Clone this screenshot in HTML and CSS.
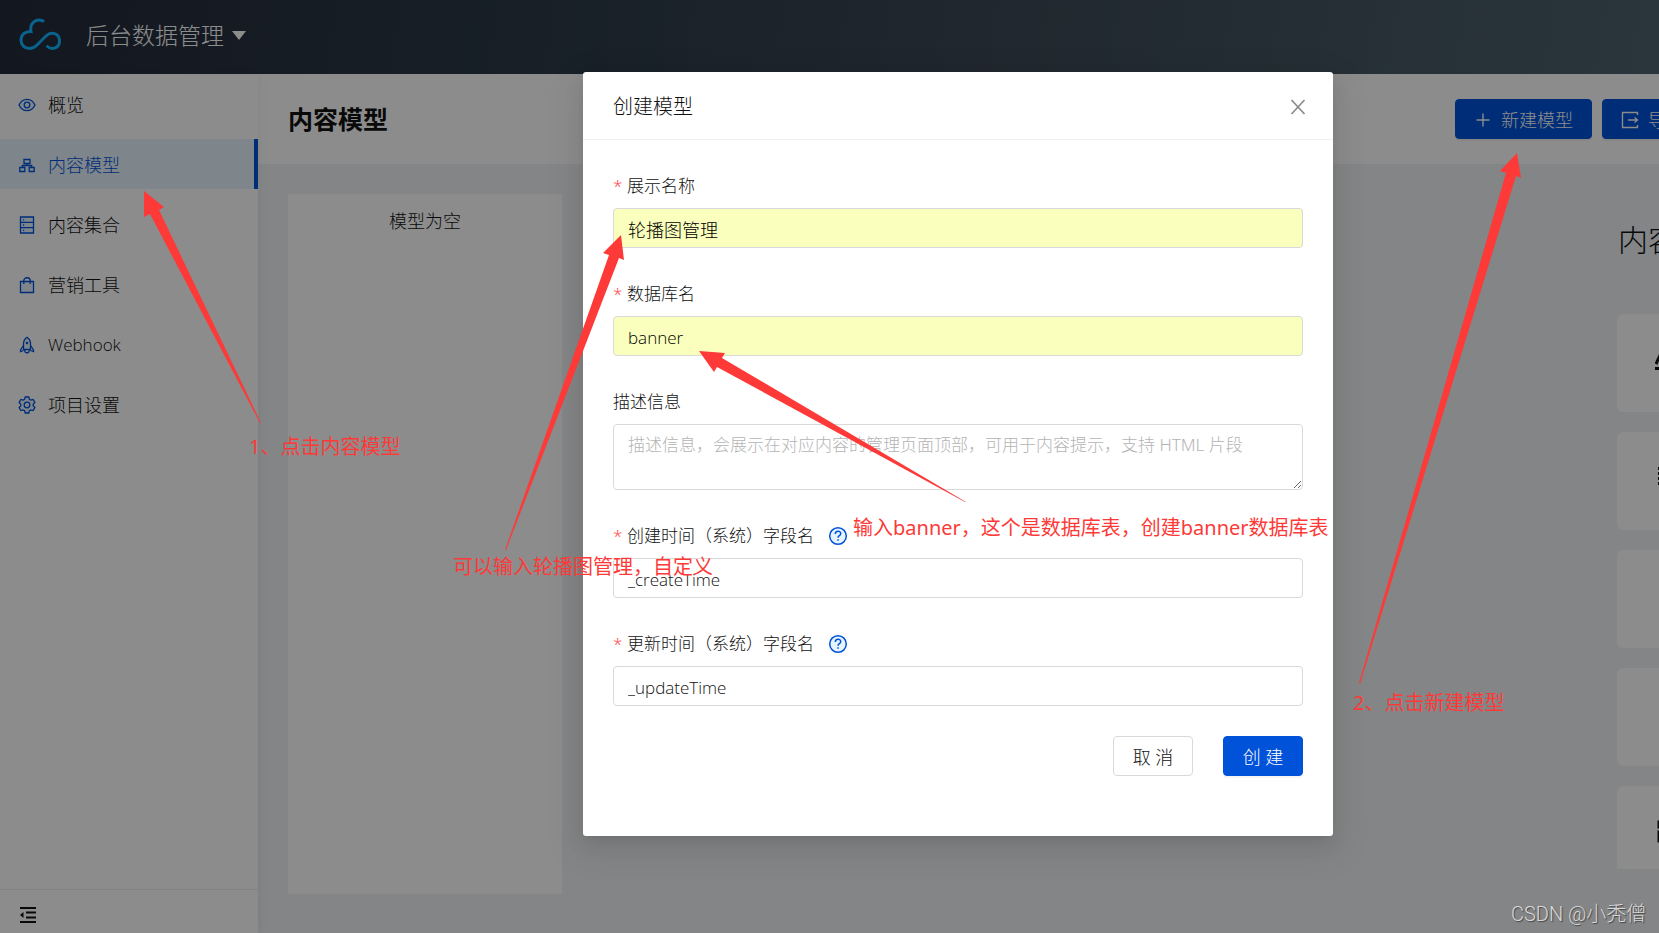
FILE: index.html
```html
<!DOCTYPE html>
<html lang="zh-CN">
<head>
<meta charset="utf-8">
<title>内容模型 - 后台数据管理</title>
<link rel="stylesheet" href="styles.css">
</head>
<body>
<div class="app">
  <header class="topbar">
    <svg class="logo" width="44" height="34" viewBox="0 0 44 34" aria-hidden="true">
      <path d="M25 4C18 1 11.500 6 13 14.500C7 14 3 18 3 23C3 28 6.500 31.500 11.500 31.500C15 31.500 17 30 19 28L28 19C33 14 41.500 16 41.500 24C41.500 31 34 33.500 29.500 29.500"/>
    </svg>
    <button class="project" type="button">后台数据管理<span class="caret"></span></button>
  </header>
  <div class="body">
    <aside class="sidebar">
      <nav class="menu">
        <a class="item" href="#overview">
          <svg class="icon" viewBox="0 0 18 18"><path class="tint" d="M1 9C4.500 1.500 13.500 1.500 17 9C13.500 16.500 4.500 16.500 1 9Z"/><circle cx="9" cy="9" r="2.800"/></svg>
          概览</a>
        <a class="item active" href="#schema">
          <svg class="icon" viewBox="0 0 18 18"><path d="M6 3.500h6v4H6zM1.800 11.500h5v4h-5zM11.200 11.500h5v4h-5zM9 7.500v2M4.300 11.500v-2h9.400v2"/></svg>
          内容模型</a>
        <a class="item" href="#content">
          <svg class="icon" viewBox="0 0 18 18"><path class="tint" d="M2.500 1h13v16h-13z"/><path d="M2.500 6.300h13M2.500 11.700h13M5 3.800h1.200M5 9h1.200M5 14.400h1.200"/></svg>
          内容集合</a>
        <a class="item" href="#marketing">
          <svg class="icon" viewBox="0 0 18 18"><path class="tint" d="M2.500 5.500h13v11h-13z"/><path d="M5.800 8V4.500C5.800 .8 12.200 .8 12.200 4.500V8"/></svg>
          营销工具</a>
        <a class="item latin" href="#webhook">
          <svg class="icon" viewBox="0 0 18 18"><path class="tint" d="M5.500 13.500V7Q6 3 9 1.200Q12 3 12.500 7v6.500z"/><path d="M5.500 9.500L2.500 14v1.500l3-1M12.500 9.500l3 4.500v1.500l-3-1M6.500 14Q7 17 9 17t2.500-3"/><circle cx="9" cy="7" r=".6"/></svg>
          Webhook</a>
        <a class="item" href="#settings">
          <svg class="icon" viewBox="0 0 18 18"><path class="tint" d="M7.200 1h3.600l.6 2.300 1.400.8 2.300-.7 1.800 3.100-1.700 1.700v1.600l1.700 1.700-1.800 3.100-2.300-.7-1.400.8-.6 2.300H7.200l-.6-2.300-1.400-.8-2.300.7-1.800-3.100 1.700-1.700V8.200L1.100 6.500l1.800-3.100 2.300.7 1.400-.8z"/><circle cx="9" cy="9" r="2.800"/></svg>
          项目设置</a>
      </nav>
      <button class="collapse" type="button" aria-label="收起菜单">
        <svg width="18" height="18" viewBox="0 0 18 18"><path d="M1 2h16M7 6.500h10M7 11.500h10M1 16h16" stroke="currentColor" stroke-width="1.800"/><path d="M1 9l3.500-3v6z" fill="currentColor"/></svg>
      </button>
    </aside>
    <main class="workspace">
      <div class="pagehead">
        <h1>内容模型</h1>
        <div class="actions">
          <button class="btn primary" type="button"><svg class="glyph" viewBox="0 0 18 18"><path d="M9 2.500v13M2.500 9h13"/></svg>新建模型</button>
          <button class="btn primary" type="button"><svg class="glyph" viewBox="0 0 18 18"><path d="M16.500 4V1.500h-15v15h15V14M7 9h9M13.500 6.500L16.500 9l-3 2.500"/></svg>导出模型</button>
          <button class="btn primary" type="button"><svg class="glyph" viewBox="0 0 18 18"><path d="M16.500 4V1.500h-15v15h15V14M7 9h9M9.500 6.500L7 9l2.500 2.500"/></svg>导入模型</button>
        </div>
      </div>
      <div class="columns">
        <section class="models">模型为空</section>
        <section class="types">
          <h2>内容类型</h2>
          <div class="typelist">
            <div class="type"><svg viewBox="0 0 24 24"><path d="M1 17L8 2h2l8 15M0 21.500h20M5 12h10"/></svg>单行字符串</div>
            <div class="type"><svg viewBox="0 0 24 24"><path d="M3 3.500h18M3 8.500h18M3 13.500h18M3 18.500h18"/></svg>多行字符串</div>
            <div class="type"></div>
            <div class="type"></div>
            <div class="type"><svg viewBox="0 0 24 24"><path d="M4 3h16v5H4zM4 13h16v9H4z"/></svg>布尔值</div>
          </div>
        </section>
      </div>
    </main>
  </div>

  <div class="mask">
    <div class="modal" role="dialog" aria-labelledby="dialog-title">
      <div class="modalhead">
        <h3 id="dialog-title">创建模型</h3>
        <button class="close" type="button" aria-label="关闭"><svg width="16" height="18" viewBox="0 0 16 18"><path d="M1.500 2L14.500 16M14.500 2L1.500 16"/></svg></button>
      </div>
      <form class="form">
        <div class="field">
          <label class="required" for="display-name">展示名称</label>
          <input class="filled" id="display-name" type="text" value="轮播图管理">
        </div>
        <div class="field">
          <label class="required" for="db-name">数据库名</label>
          <input class="filled latin" id="db-name" type="text" value="banner">
        </div>
        <div class="field">
          <label for="description">描述信息</label>
          <textarea id="description" placeholder="描述信息，会展示在对应内容的管理页面顶部，可用于内容提示，支持 HTML 片段"></textarea>
        </div>
        <div class="field">
          <label class="required" for="create-time">创建时间（系统）字段名<svg class="help" viewBox="0 0 20 20"><circle cx="10" cy="10" r="8.300"/><path d="M7.300 8C7.300 4.200 12.700 4.300 12.700 7.700C12.700 9.700 10 9.700 10 11.700M10 13.300v1.500"/></svg></label>
          <input class="latin" id="create-time" type="text" value="_createTime">
        </div>
        <div class="field">
          <label class="required" for="update-time">更新时间（系统）字段名<svg class="help" viewBox="0 0 20 20"><circle cx="10" cy="10" r="8.300"/><path d="M7.300 8C7.300 4.200 12.700 4.300 12.700 7.700C12.700 9.700 10 9.700 10 11.700M10 13.300v1.500"/></svg></label>
          <input class="latin" id="update-time" type="text" value="_updateTime">
        </div>
        <div class="buttons">
          <button class="btn" type="button">取 消</button>
          <button class="btn primary" type="button">创 建</button>
        </div>
      </form>
    </div>
  </div>

  <div class="notes">
    <svg class="arrows" width="1659" height="933" viewBox="0 0 1659 933" aria-hidden="true">
      <path d="M144 191L164 207L159 210L261 423L260 423L150 214L144 217Z"/>
      <path d="M621 235L603 253L609 255L505 550L506 550L619 258L624 260Z"/>
      <path d="M699 351L725 353L722 358L966 502L965 502L717 367L714 372Z"/>
      <path d="M1517 153L1500 171L1506 173L1359 683L1360 684L1516 176L1521 178Z"/>
    </svg>
    <p class="note step-one">1、点击内容模型</p>
    <p class="note step-two">2、点击新建模型</p>
    <p class="note step-name">可以输入轮播图管理，自定义</p>
    <p class="note step-table">输入banner，这个是数据库表，创建banner数据库表</p>
    <p class="watermark">CSDN @小秃僧</p>
  </div>
</div>
</body>
</html>
```
FILE: styles.css
```css
* {
  box-sizing: border-box;
}

body {
  margin: 0;
  overflow: hidden;
  color: #111;
  font: 300 18px/28px "Noto Sans", "Noto Sans CJK SC", sans-serif;
}

h1, h2, h3, p {
  margin: 0;
}

button, input, textarea {
  margin: 0;
  color: inherit;
  font: inherit;
}

.latin {
  font-family: "Open Sans", "Noto Sans CJK SC", sans-serif;
  font-size: 17px;
}

.app {
  position: relative;
  display: flex;
  flex-direction: column;
  min-width: 1916px;
  height: 100vh;
  overflow: hidden;
}

/* Top bar */
.topbar {
  display: flex;
  flex: none;
  align-items: center;
  gap: 24px;
  height: 74px;
  padding: 0 18px 4px;
  background: linear-gradient(100deg, #242b3a, #2b3946 25%, #3b4754 50%, #4e646f 88%, #556b76);
}

.logo {
  margin-bottom: 2px;
}

.logo path {
  fill: none;
  stroke: #12b4ff;
  stroke-width: 3;
  stroke-linecap: round;
}

.project {
  display: flex;
  align-items: center;
  gap: 8px;
  padding: 0;
  border: 0;
  background: none;
  color: #fff;
  font-size: 23px;
}

.caret {
  border: 7px solid transparent;
  border-top: 9px solid #fff;
  border-bottom: 0;
}

.body {
  display: flex;
  flex: 1;
  min-height: 0;
}

/* Side menu */
.sidebar {
  position: relative;
  display: flex;
  flex: none;
  flex-direction: column;
  justify-content: space-between;
  width: 258px;
  background: #fff;
  box-shadow: 2px 0 8px rgba(29, 35, 41, .05);
}

.menu {
  display: grid;
  gap: 10px;
  padding-top: 5px;
}

.item {
  display: flex;
  align-items: center;
  gap: 12px;
  height: 50px;
  padding: 1px 0 0 18px;
  color: #111;
  text-decoration: none;
}

.item.active {
  border-right: 4px solid #0052d9;
  background: #e6f4ff;
  color: #0052d9;
}

.icon {
  width: 18px;
  height: 18px;
  fill: none;
  stroke: #0052d9;
  stroke-width: 1.3;
}

.tint {
  fill: #e6f4ff;
}

.collapse {
  display: flex;
  align-items: center;
  height: 44px;
  padding: 6px 19px 0;
  border: 0;
  border-top: 1px solid #eee;
  background: none;
}

/* Workspace */
.workspace {
  display: flex;
  flex: 1;
  flex-direction: column;
  background: #f0f2f5;
}

.pagehead {
  display: flex;
  flex: none;
  align-items: center;
  justify-content: space-between;
  height: 90px;
  padding: 0 30px;
  background: #fff;
}

h1 {
  font-size: 25px;
  font-weight: 700;
}

.actions {
  display: flex;
  gap: 10px;
}

.btn {
  display: flex;
  align-items: center;
  justify-content: center;
  gap: 9px;
  height: 40px;
  padding: 2px 18px 0;
  border: 1px solid #d9d9d9;
  border-radius: 4px;
  background: #fff;
  white-space: nowrap;
}

.btn.primary {
  border-color: #0052d9;
  background: #0052d9;
  box-shadow: 0 2px 0 rgba(0, 0, 0, .04);
  color: #fff;
}

.glyph {
  width: 18px;
  height: 18px;
  fill: none;
  stroke: currentColor;
  stroke-width: 1.4;
}

.columns {
  display: flex;
  flex: 1;
  justify-content: space-between;
  min-height: 0;
  padding: 30px 30px 39px;
}

.models {
  width: 274px;
  padding-top: 13px;
  background: #fff;
  text-align: center;
}

.types {
  display: flex;
  flex-direction: column;
  gap: 50px;
  width: 269px;
  padding: 22px 0 25px;
}

h2 {
  padding-left: 1px;
  font-size: 30px;
  font-weight: 300;
  line-height: 48px;
}

.typelist {
  display: flex;
  flex: 1;
  flex-direction: column;
  gap: 20px;
  min-height: 0;
  overflow: hidden;
}

.type {
  display: flex;
  flex: none;
  align-items: center;
  gap: 20px;
  height: 98px;
  padding: 0 0 8px 38px;
  border-radius: 6px;
  background: #fff;
}

.type svg {
  width: 24px;
  height: 24px;
  fill: none;
  stroke: #111;
  stroke-width: 3;
}

/* Dialog */
.mask {
  position: absolute;
  inset: 0;
  padding-top: 72px;
  background: rgba(0, 0, 0, .45);
}

.modal {
  width: 750px;
  margin: 0 auto;
  border-radius: 3px;
  background: #fff;
  box-shadow: 0 4px 8px -5px rgba(0, 0, 0, .12), 0 8px 20px rgba(0, 0, 0, .08), 0 11px 35px 10px rgba(0, 0, 0, .05);
}

.modalhead {
  display: flex;
  align-items: center;
  justify-content: space-between;
  height: 68px;
  padding: 3px 27px 0 30px;
  border-bottom: 1px solid #f0f0f0;
}

h3 {
  font-size: 20px;
  font-weight: 300;
}

.close {
  display: flex;
  padding: 0;
  border: 0;
  background: none;
}

.close path {
  fill: none;
  stroke: #888;
  stroke-width: 1.6;
}

.form {
  display: flex;
  flex-direction: column;
  gap: 30px;
  padding: 30px 30px 60px;
}

.field {
  display: flex;
  flex-direction: column;
  gap: 6px;
}

label {
  display: flex;
  align-items: center;
  height: 32px;
  font-size: 17px;
}

.required::before {
  width: 14px;
  color: #ff4d4f;
  content: "*";
}

.help {
  width: 20px;
  height: 20px;
  margin-left: 14px;
  fill: none;
  stroke: #0052d9;
  stroke-width: 1.5;
}

.help circle {
  fill: #e6f4ff;
}

input, textarea {
  width: 100%;
  height: 40px;
  padding: 2px 14px 0;
  border: 1px solid #d9d9d9;
  border-radius: 4px;
  background: #fff;
}

textarea {
  display: block;
  height: 66px;
  padding-top: 6px;
  font-size: 17px;
  resize: vertical;
}

textarea::placeholder {
  color: #b4b4b4;
}

.filled {
  background: #faffbd;
  color: #000;
}

.buttons {
  display: flex;
  justify-content: flex-end;
  gap: 30px;
}

.buttons .btn {
  width: 80px;
  padding: 2px 0 0;
}

/* Notes drawn over the page */
.notes {
  position: absolute;
  inset: 0;
  color: #fd3a38;
  pointer-events: none;
}

.arrows {
  display: block;
  fill: currentColor;
}

.note, .watermark {
  position: absolute;
  font-size: 20px;
  font-weight: 400;
  white-space: nowrap;
}

.step-one {
  top: 433px;
  left: 249px;
}

.step-two {
  top: 689px;
  left: 1353px;
}

.step-name {
  top: 553px;
  left: 453px;
}

.step-table {
  top: 514px;
  left: 853px;
}

.watermark {
  top: 900px;
  left: 1511px;
  color: #d8d8d8;
  font-family: Roboto, "Noto Sans CJK SC", sans-serif;
  font-weight: 300;
  text-shadow: 1px 1px 1px #444;
}
```
